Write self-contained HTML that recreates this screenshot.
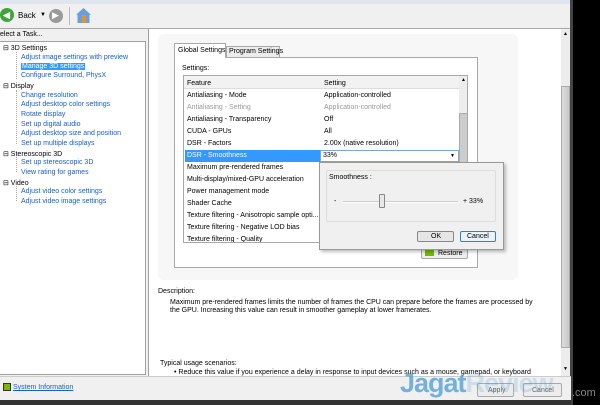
<!DOCTYPE html>
<html><head><style>
*{margin:0;padding:0;box-sizing:border-box}
body{width:600px;height:405px;overflow:hidden;background:#000;font-family:"Liberation Sans",sans-serif;font-size:7px;color:#000;position:relative}
.a{position:absolute}
.t{position:absolute;white-space:nowrap;font-size:7px}
.lk{color:#1a5fc8}
</style></head><body>
<div class="a" style="left:0;top:0;width:571px;height:405px;background:#f0f0f0"></div>
<div class="a" style="left:0;top:0;width:571px;height:4px;background:#dfe6ef"></div>
<div class="a" style="left:0;top:4px;width:571px;height:25px;background:#f0f0f0;border-bottom:1px solid #a8a8a8"></div>
<div class="a" style="left:0;top:8px;width:14px;height:14px;border-radius:50%;background:#3fa43a"></div>
<div class="t" style="left:3px;top:10px;color:#fff;font-size:9px;font-weight:bold">◀</div>
<div class="t" style="left:18px;top:11px;font-size:8px">Back</div>
<div class="t" style="left:40px;top:12px;font-size:6px">▼</div>
<div class="a" style="left:49px;top:9px;width:14px;height:14px;border-radius:50%;background:#9a9a9a"></div>
<div class="t" style="left:52px;top:10px;color:#fff;font-size:9px">▶</div>
<div class="a" style="left:69px;top:7px;width:1px;height:18px;background:#bbb"></div>
<div class="a" style="left:76px;top:8px;width:15px;height:15px;background:#6aa0d8;clip-path:polygon(50% 0,100% 45%,90% 45%,90% 100%,10% 100%,10% 45%,0 45%)"></div>
<div class="a" style="left:82px;top:15px;width:4px;height:8px;background:#e89030"></div>
<div class="t" style="left:0;top:31px">elect a Task...</div>
<div class="a" style="left:0;top:41px;width:146px;height:334px;background:#fff;border:1px solid #a0a0a0;border-left:none"></div>
<div class="t" style="left:3px;top:44px">⊟ 3D Settings</div>
<div class="t lk" style="left:21px;top:54px">Adjust image settings with preview</div>
<div class="t" style="left:21px;top:63px;background:#3399ff;color:#fff;padding:0 1px">Manage 3D settings</div>
<div class="t lk" style="left:21px;top:72px">Configure Surround, PhysX</div>
<div class="t" style="left:3px;top:82px">⊟ Display</div>
<div class="t lk" style="left:21px;top:92px">Change resolution</div>
<div class="t lk" style="left:21px;top:101px">Adjust desktop color settings</div>
<div class="t lk" style="left:21px;top:111px">Rotate display</div>
<div class="t lk" style="left:21px;top:121px">Set up digital audio</div>
<div class="t lk" style="left:21px;top:130px">Adjust desktop size and position</div>
<div class="t lk" style="left:21px;top:140px">Set up multiple displays</div>
<div class="t" style="left:3px;top:150px">⊟ Stereoscopic 3D</div>
<div class="t lk" style="left:21px;top:159px">Set up stereoscopic 3D</div>
<div class="t lk" style="left:21px;top:169px">View rating for games</div>
<div class="t" style="left:3px;top:179px">⊟ Video</div>
<div class="t lk" style="left:21px;top:188px">Adjust video color settings</div>
<div class="t lk" style="left:21px;top:198px">Adjust video image settings</div>
<div class="a" style="left:16px;top:52px;width:1px;height:27px;border-left:1px dotted #aaa"></div>
<div class="a" style="left:16px;top:90px;width:1px;height:54px;border-left:1px dotted #aaa"></div>
<div class="a" style="left:16px;top:157px;width:1px;height:15px;border-left:1px dotted #aaa"></div>
<div class="a" style="left:16px;top:186px;width:1px;height:15px;border-left:1px dotted #aaa"></div>
<div class="a" style="left:148px;top:29px;width:413px;height:347px;background:#fff;border-left:1px solid #a0a0a0"></div>
<div class="a" style="left:158px;top:34px;width:360px;height:246px;background:#f7f7f7;border-radius:6px"></div>
<div class="a" style="left:561px;top:30px;width:9px;height:347px;background:#ececec"></div>
<div class="a" style="left:561px;top:86px;width:9px;height:262px;background:linear-gradient(90deg,#ddd,#c8c8c8);border:1px solid #aaa"></div>
<div class="t" style="left:563px;top:31px;font-size:5px">▲</div>
<div class="t" style="left:563px;top:366px;font-size:5px">▼</div>
<div class="a" style="left:570px;top:0;width:3px;height:405px;background:#444"></div>
<div class="a" style="left:174px;top:57px;width:304px;height:211px;background:#fff;border:1px solid #a8a8a8"></div>
<div class="a" style="left:174px;top:43px;width:52px;height:15px;background:#fff;border:1px solid #a8a8a8;border-bottom:none"></div>
<div class="t" style="left:178px;top:47px">Global Settings</div>
<div class="a" style="left:226px;top:46px;width:54px;height:11px;background:#ececec;border:1px solid #a8a8a8;border-bottom:none"></div>
<div class="t" style="left:229px;top:48px">Program Settings</div>
<div class="t" style="left:182px;top:65px">Settings:</div>
<div class="a" style="left:183px;top:75px;width:285px;height:168px;background:#fff;border:1px solid #a8a8a8;overflow:hidden">
<div class="a" style="left:0;top:0;width:275px;height:13px;background:#f2f2f2;border-bottom:1px solid #ddd"></div>
<div class="t" style="left:3px;top:4px">Feature</div><div class="t" style="left:140px;top:4px">Setting</div>
<div class="a" style="left:275px;top:0;width:9px;height:168px;background:#ededed"></div>
<div class="a" style="left:275px;top:37px;width:9px;height:50px;background:#ccc;border:1px solid #aaa"></div>
<div class="t" style="left:277px;top:1px;font-size:5px">▲</div>
<div class="t" style="left:3px;top:16px">Antialiasing - Mode</div><div class="t" style="left:140px;top:16px">Application-controlled</div>
<div class="t" style="left:3px;top:28px;color:#999">Antialiasing - Setting</div><div class="t" style="left:140px;top:28px;color:#999">Application-controlled</div>
<div class="t" style="left:3px;top:40px">Antialiasing - Transparency</div><div class="t" style="left:140px;top:40px">Off</div>
<div class="t" style="left:3px;top:52px">CUDA - GPUs</div><div class="t" style="left:140px;top:52px">All</div>
<div class="t" style="left:3px;top:64px">DSR - Factors</div><div class="t" style="left:140px;top:64px">2.00x (native resolution)</div>
<div class="a" style="left:1px;top:74px;width:135px;height:12px;background:#3399ff"></div>
<div class="t" style="left:3px;top:76px;color:#fff">DSR - Smoothness</div>
<div class="a" style="left:136px;top:74px;width:139px;height:12px;border:1px solid #7aa7d8;background:#fff"></div>
<div class="t" style="left:139px;top:76px">33%</div><div class="t" style="left:266px;top:77px;font-size:5px">▼</div>
<div class="t" style="left:3px;top:88px">Maximum pre-rendered frames</div>
<div class="t" style="left:3px;top:100px">Multi-display/mixed-GPU acceleration</div>
<div class="t" style="left:3px;top:112px">Power management mode</div>
<div class="t" style="left:3px;top:124px">Shader Cache</div>
<div class="t" style="left:3px;top:136px">Texture filtering - Anisotropic sample opti...</div>
<div class="t" style="left:3px;top:148px">Texture filtering - Negative LOD bias</div>
<div class="t" style="left:3px;top:160px">Texture filtering - Quality</div>
</div>
<div class="a" style="left:421px;top:246px;width:47px;height:13px;background:#eee;border:1px solid #aaa;border-radius:2px"></div>
<div class="a" style="left:425px;top:250px;width:9px;height:6px;background:#76b900"></div>
<div class="t" style="left:438px;top:250px">Restore</div>
<div class="a" style="left:319px;top:162px;width:185px;height:88px;background:#f0f0f0;border:1px solid #999;box-shadow:2px 2px 3px rgba(0,0,0,.25)"></div>
<div class="a" style="left:326px;top:170px;width:170px;height:52px;border:1px solid #dcdcdc;border-radius:2px"></div>
<div class="t" style="left:329px;top:174px">Smoothness :</div>
<div class="t" style="left:334px;top:198px">-</div>
<div class="a" style="left:343px;top:201px;width:115px;height:2px;background:#ccc;border-bottom:1px solid #fff"></div>
<div class="a" style="left:379px;top:194px;width:6px;height:14px;background:#e8e8e8;border:1px solid #888;border-radius:1px"></div>
<div class="t" style="left:463px;top:198px">+ 33%</div>
<div class="a" style="left:417px;top:231px;width:37px;height:11px;background:#e6e6e6;border:1px solid #888;border-radius:2px"></div>
<div class="t" style="left:431px;top:233px">OK</div>
<div class="a" style="left:460px;top:231px;width:36px;height:11px;background:#e9f2fb;border:1px solid #3c7fb1;border-radius:2px"></div>
<div class="t" style="left:467px;top:233px">Cancel</div>
<div class="t" style="left:158px;top:288px">Description:</div>
<div class="t" style="left:170px;top:299px">Maximum pre-rendered frames limits the number of frames the CPU can prepare before the frames are processed by</div>
<div class="t" style="left:170px;top:307px">the GPU. Increasing this value can result in smoother gameplay at lower framerates.</div>
<div class="t" style="left:160px;top:360px">Typical usage scenarios:</div>
<div class="t" style="left:174px;top:369px">• Reduce this value if you experience a delay in response to input devices such as a mouse, gamepad, or keyboard</div>
<div class="a" style="left:0;top:376px;width:571px;height:24px;background:#f0f0f0;border-top:1px solid #ccc"></div>
<div class="a" style="left:3px;top:383px;width:8px;height:8px;background:#76b900;border:1px solid #333"></div>
<div class="t lk" style="left:13px;top:384px;text-decoration:underline">System Information</div>
<div class="a" style="left:477px;top:383px;width:37px;height:14px;background:#ececec;border:1px solid #aaa;border-radius:2px"></div>
<div class="t" style="left:488px;top:387px;color:#666">Apply</div>
<div class="a" style="left:523px;top:383px;width:39px;height:14px;background:#ececec;border:1px solid #aaa;border-radius:2px"></div>
<div class="t" style="left:532px;top:387px;color:#666">Cancel</div>
<div class="a" style="left:0;top:400px;width:571px;height:5px;background:#333"></div>
<div class="t" style="left:400px;top:368px;font-size:27px;color:rgba(60,150,210,.7);font-weight:bold;letter-spacing:-1px">Jagat<span style="color:rgba(60,150,210,.2)">Review</span></div>
<div class="t" style="left:572px;top:387px;font-size:11px;color:#888">.com</div>
</body></html>
